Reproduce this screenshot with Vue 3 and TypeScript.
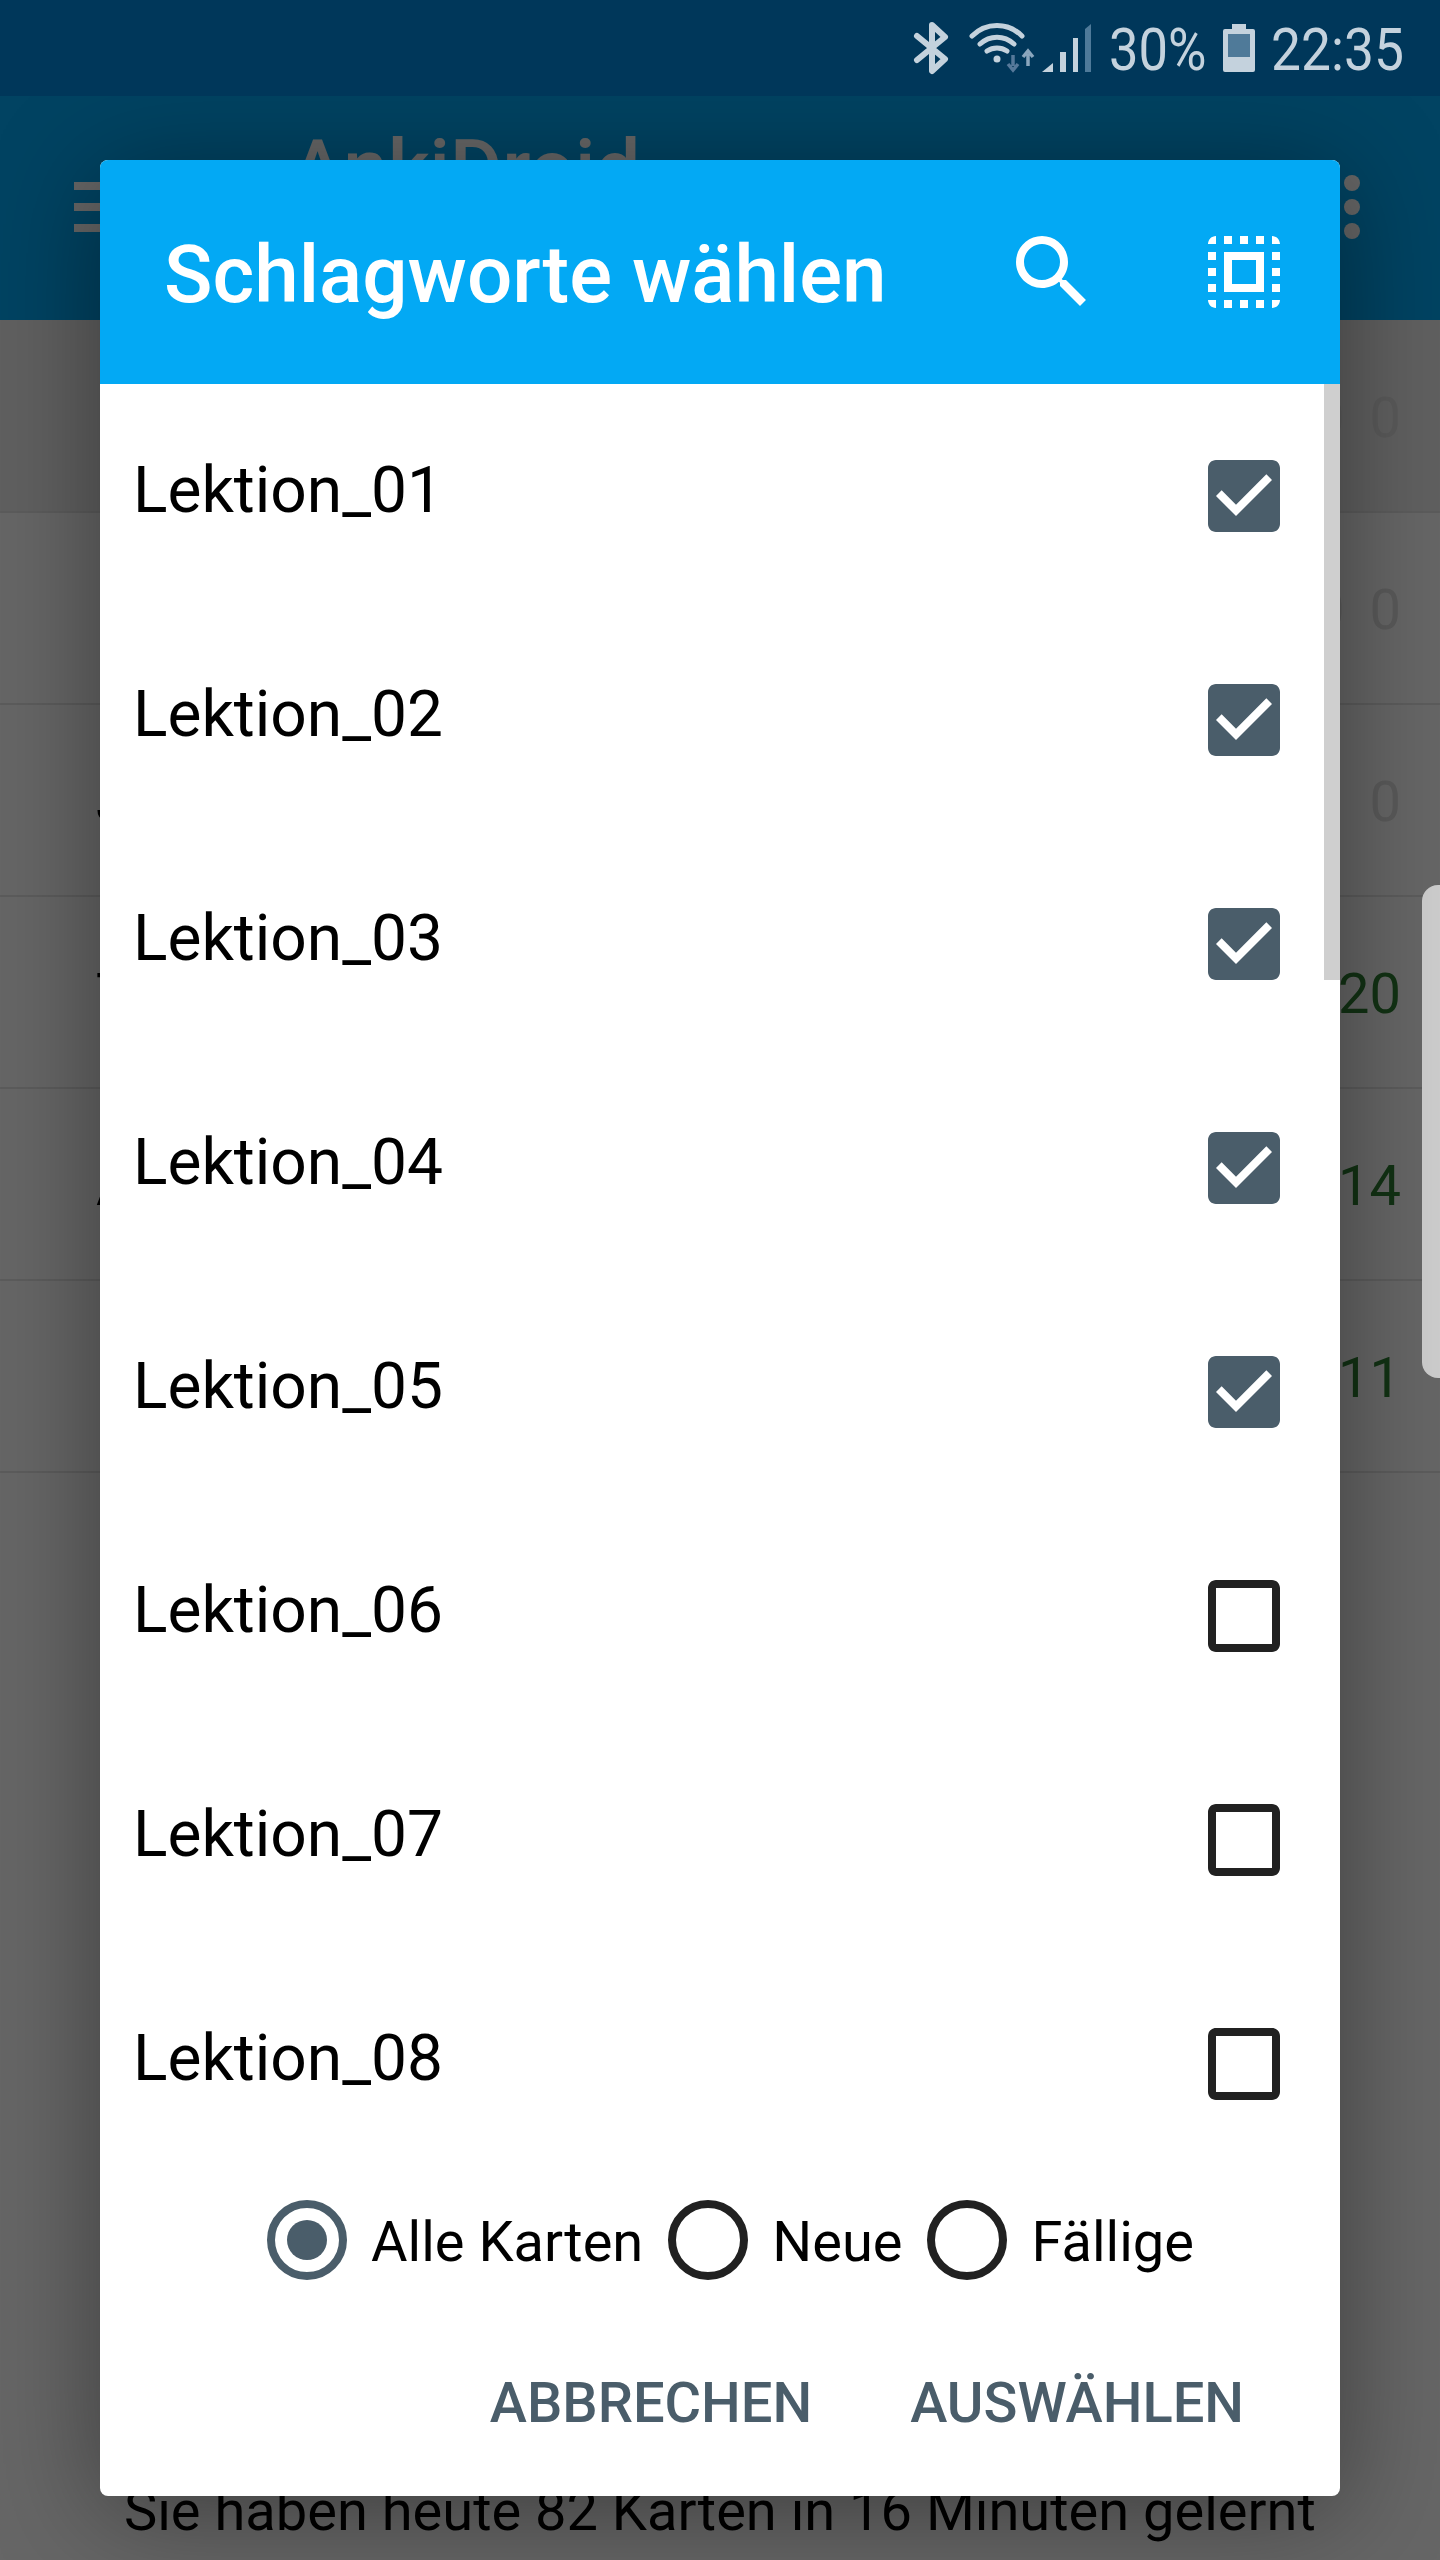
<template>
  <div class="screen">
    <!-- Hintergrund: Deck-Liste -->
    <div class="statusbar">
      <svg class="st-icons" width="130" height="96" viewBox="0 0 130 96">
        <!-- bluetooth -->
        <path d="M5 36l28 23-13 12V25l13 12L5 60" fill="none" stroke="#c4d2dd" stroke-width="6" stroke-linejoin="round" stroke-linecap="round" />
        <!-- wifi -->
        <path d="M60 36C74 22 96 22 110 36M68 44C78 35 92 35 102 44M75 51C81 47 89 47 95 51" fill="none" stroke="#c4d2dd" stroke-width="5" stroke-linecap="round" />
        <circle cx="85" cy="59" r="3.5" fill="#c4d2dd" />
        <path d="M101 55v11M96 64l5 6 5-6" fill="none" stroke="#56799a" stroke-width="3.5" />
        <path d="M116 66V54M111 57l5-6 5 6" fill="none" stroke="#8aa6bd" stroke-width="3.5" />
      </svg>
      <svg class="st-signal" width="50" height="96" viewBox="0 0 50 96">
        <path d="M0 72l11-9v9z" fill="#c4d2dd" />
        <rect x="18" y="52" width="6" height="20" fill="#c4d2dd" />
        <rect x="31" y="38" width="5" height="34" fill="#c4d2dd" />
        <path d="M43 29l6-5v48h-6z" fill="#4f7a99" />
      </svg>
      <span class="st-text st-pct">30%</span>
      <svg class="st-battery" width="32" height="96" viewBox="0 0 32 96">
        <path d="M9 24h14v5h7a2 2 0 0 1 2 2v39a2 2 0 0 1-2 2H2a2 2 0 0 1-2-2V31a2 2 0 0 1 2-2h7z" fill="#c4d2dd" />
        <rect x="5" y="34" width="22" height="23" fill="#4f7a99" />
      </svg>
      <span class="st-text st-time">22:35</span>
    </div>

    <div class="appbar">
      <div class="burger"><i></i><i></i><i></i></div>
      <div class="app-title">AnkiDroid</div>
      <div class="dots"><i></i><i></i><i></i></div>
    </div>

    <div class="decks">
      <div v-for="(d, i) in decks" :key="i" class="deck" :class="{ first: i === 0 }">
        <span class="deck-name">{{ d.name }}</span>
        <span class="counts">
          <span v-if="d.mid" class="count">{{ d.mid }}</span>
          <span class="count" :class="{ green: d.count !== '0' }">{{ d.count }}</span>
        </span>
      </div>
    </div>

    <div class="studied">Sie haben heute 82 Karten in 16 Minuten gelernt</div>

    <div class="scrim"></div>
    <div class="edge-panel"></div>

    <!-- Dialog -->
    <div class="dialog">
      <div class="dlg-head">
        <div class="dlg-title">Schlagworte wählen</div>
        <svg class="head-icon" width="96" height="96" viewBox="0 0 24 24" fill="#fff">
          <path d="M15.5 14h-.79l-.28-.27C15.41 12.59 16 11.11 16 9.5 16 5.91 13.09 3 9.5 3S3 5.91 3 9.5 5.91 16 9.5 16c1.61 0 3.09-.59 4.23-1.57l.27.28v.79l5 4.99L20.49 19l-4.99-5zm-6 0C7.01 14 5 11.99 5 9.5S7.01 5 9.5 5 14 7.01 14 9.5 11.99 14 9.5 14z" />
        </svg>
        <svg class="head-icon" width="96" height="96" viewBox="0 0 24 24" fill="#fff">
          <path d="M3 5h2V3c-1.1 0-2 .9-2 2zm0 8h2v-2H3v2zm4 8h2v-2H7v2zM3 9h2V7H3v2zm10-6h-2v2h2V3zm6 0v2h2c0-1.1-.9-2-2-2zM5 21v-2H3c0 1.1.9 2 2 2zm-2-4h2v-2H3v2zM9 3H7v2h2V3zm2 18h2v-2h-2v2zm8-8h2v-2h-2v2zm0 8c1.1 0 2-.9 2-2h-2v2zm0-12h2V7h-2v2zm0 8h2v-2h-2v2zm-4 4h2v-2h-2v2zm0-16h2V3h-2v2zM7 17h10V7H7v10zm2-8h6v6H9V9z" />
        </svg>
      </div>

      <div class="tag-list">
        <div v-for="t in tags" :key="t.name" class="tag-row">
          <span class="tag-name">{{ t.name }}</span>
          <svg v-if="t.checked" width="96" height="96" viewBox="0 0 24 24" fill="#4a5d6a">
            <path d="M19 3H5c-1.11 0-2 .9-2 2v14c0 1.1.89 2 2 2h14c1.11 0 2-.9 2-2V5c0-1.1-.89-2-2-2zm-9 14l-5-5 1.41-1.41L10 14.17l7.59-7.59L19 8l-9 9z" />
          </svg>
          <svg v-else width="96" height="96" viewBox="0 0 24 24" fill="#212121">
            <path d="M19 5v14H5V5h14m0-2H5c-1.1 0-2 .9-2 2v14c0 1.1.9 2 2 2h14c1.1 0 2-.9 2-2V5c0-1.1-.9-2-2-2z" />
          </svg>
        </div>
        <div class="scroll-thumb"></div>
      </div>

      <div class="radios">
        <div v-for="r in radios" :key="r.label" class="radio">
          <svg width="96" height="96" viewBox="0 0 96 96">
            <circle cx="48" cy="48" r="36" fill="none" :stroke="r.on ? '#4a5d6a' : '#212121'" stroke-width="8" />
            <circle v-if="r.on" cx="48" cy="48" r="20" fill="#4a5d6a" />
          </svg>
          <span class="radio-label">{{ r.label }}</span>
        </div>
      </div>

      <div class="actions">
        <span class="btn">ABBRECHEN</span>
        <span class="btn">AUSWÄHLEN</span>
      </div>
    </div>
  </div>
</template>

<script setup lang="ts">
interface Tag {
  name: string
  checked: boolean
}

interface Deck {
  name: string
  mid?: string
  count: string
}

const tags: Tag[] = [1, 2, 3, 4, 5, 6, 7, 8].map((n) => ({
  name: `Lektion_0${n}`,
  checked: n <= 5
}))

const radios = [
  { label: 'Alle Karten', on: true },
  { label: 'Neue', on: false },
  { label: 'Fällige', on: false }
]

// links schaut nur der erste Buchstabe unter dem Dialog hervor
const decks: Deck[] = [
  { name: '', mid: '0', count: '0' },
  { name: '', mid: '0', count: '0' },
  { name: 'J', count: '0' },
  { name: 'T', count: '20' },
  { name: 'A', count: '14' },
  { name: '', count: '11' }
]
</script>

<style>
html,
body {
  margin: 0;
  background: #666;
}
</style>

<style scoped>
.screen {
  position: relative;
  width: 1440px;
  height: 2560px;
  overflow: hidden;
  background: #fff;
  font-family: Roboto, "Liberation Sans", sans-serif;
}

/* liegt über dem Scrim, wie die echte Statusleiste */
.statusbar {
  position: relative;
  z-index: 2;
  height: 96px;
  background: #00375a;
  display: flex;
  align-items: center;
  justify-content: flex-end;
  padding-right: 38px;
  box-sizing: border-box;
}

.st-icons,
.st-signal,
.st-battery {
  flex: none;
}

.st-text {
  display: inline-block;
  font-size: 60px;
  color: #c4d2dd;
  transform: scaleX(0.875);
  transform-origin: left center;
  padding-top: 3px;
}

.st-pct {
  width: 95px;
  margin-left: 17px;
  margin-right: 19px;
}

.st-time {
  width: 131px;
  margin-left: 16px;
  transform: scaleX(0.89);
}

.appbar {
  position: relative;
  height: 224px;
  background: #03a9f4;
}

.burger {
  position: absolute;
  left: 74px;
  top: 86px;
  width: 48px;
  display: flex;
  flex-direction: column;
  gap: 13px;
}

.burger i {
  display: block;
  height: 8px;
  background: #fff;
}

.app-title {
  position: absolute;
  left: 291px;
  top: 26px;
  font-size: 80px;
  font-weight: 500;
  color: #fff;
}

.dots {
  position: absolute;
  left: 1344px;
  top: 79px;
  display: flex;
  flex-direction: column;
  gap: 8px;
}

.dots i {
  display: block;
  width: 16px;
  height: 16px;
  border-radius: 50%;
  background: #fff;
}

.deck {
  height: 192px;
  box-sizing: border-box;
  border-bottom: 2px solid #e6e6e6;
  display: flex;
  align-items: center;
  justify-content: space-between;
  padding: 4px 39px 0 96px;
}

.deck.first {
  height: 193px;
  background: #f0f0f0;
}

.deck-name {
  font-size: 56px;
  color: #000;
}

.counts {
  display: flex;
  gap: 25px;
}

.count {
  font-size: 56px;
  color: #e0e0e0;
}

.count.green {
  color: #2e7d32;
}

.studied {
  position: absolute;
  left: 124px;
  top: 2478px;
  font-size: 56px;
  color: #000;
  white-space: nowrap;
}

.scrim {
  position: absolute;
  inset: 0;
  background: rgba(0, 0, 0, 0.6);
}

.edge-panel {
  position: absolute;
  right: 0;
  top: 885px;
  width: 18px;
  height: 493px;
  background: #cdcdcd;
  border-radius: 16px 0 0 16px;
}

.dialog {
  position: absolute;
  left: 100px;
  top: 160px;
  width: 1240px;
  height: 2336px;
  background: #fff;
  border-radius: 8px;
  overflow: hidden;
  box-shadow: 0 16px 110px rgba(0, 0, 0, 0.4);
}

.dlg-head {
  height: 224px;
  background: #03a9f4;
  display: flex;
  align-items: center;
  padding: 0 48px 0 64px;
  gap: 96px;
  box-sizing: border-box;
}

.dlg-title {
  flex: 1;
  font-size: 80px;
  font-weight: 500;
  color: #fff;
  margin-right: -96px;
  padding-top: 6px;
}

.head-icon {
  flex: none;
}

.tag-list {
  position: relative;
  height: 1792px;
}

.tag-row {
  height: 224px;
  display: flex;
  align-items: center;
  justify-content: space-between;
  padding: 0 48px 0 33px;
}

.tag-name {
  font-size: 64px;
  color: #000;
  margin-top: -12px;
}

.scroll-thumb {
  position: absolute;
  right: 0;
  top: 0;
  width: 16px;
  height: 596px;
  background: #cfcfcf;
}

.radios {
  display: flex;
  justify-content: center;
  padding: 16px 0 0 6px;
}

.radio {
  display: flex;
  align-items: center;
  margin-left: 12px;
}

.radio-label {
  font-size: 56px;
  color: #000;
  margin-left: 16px;
  margin-right: 5px;
  padding-top: 3px;
}

.actions {
  display: flex;
  justify-content: flex-end;
  gap: 98px;
  padding: 82px 96px 0 0;
}

.btn {
  font-size: 56px;
  font-weight: 500;
  color: #4a5d6a;
}
</style>
